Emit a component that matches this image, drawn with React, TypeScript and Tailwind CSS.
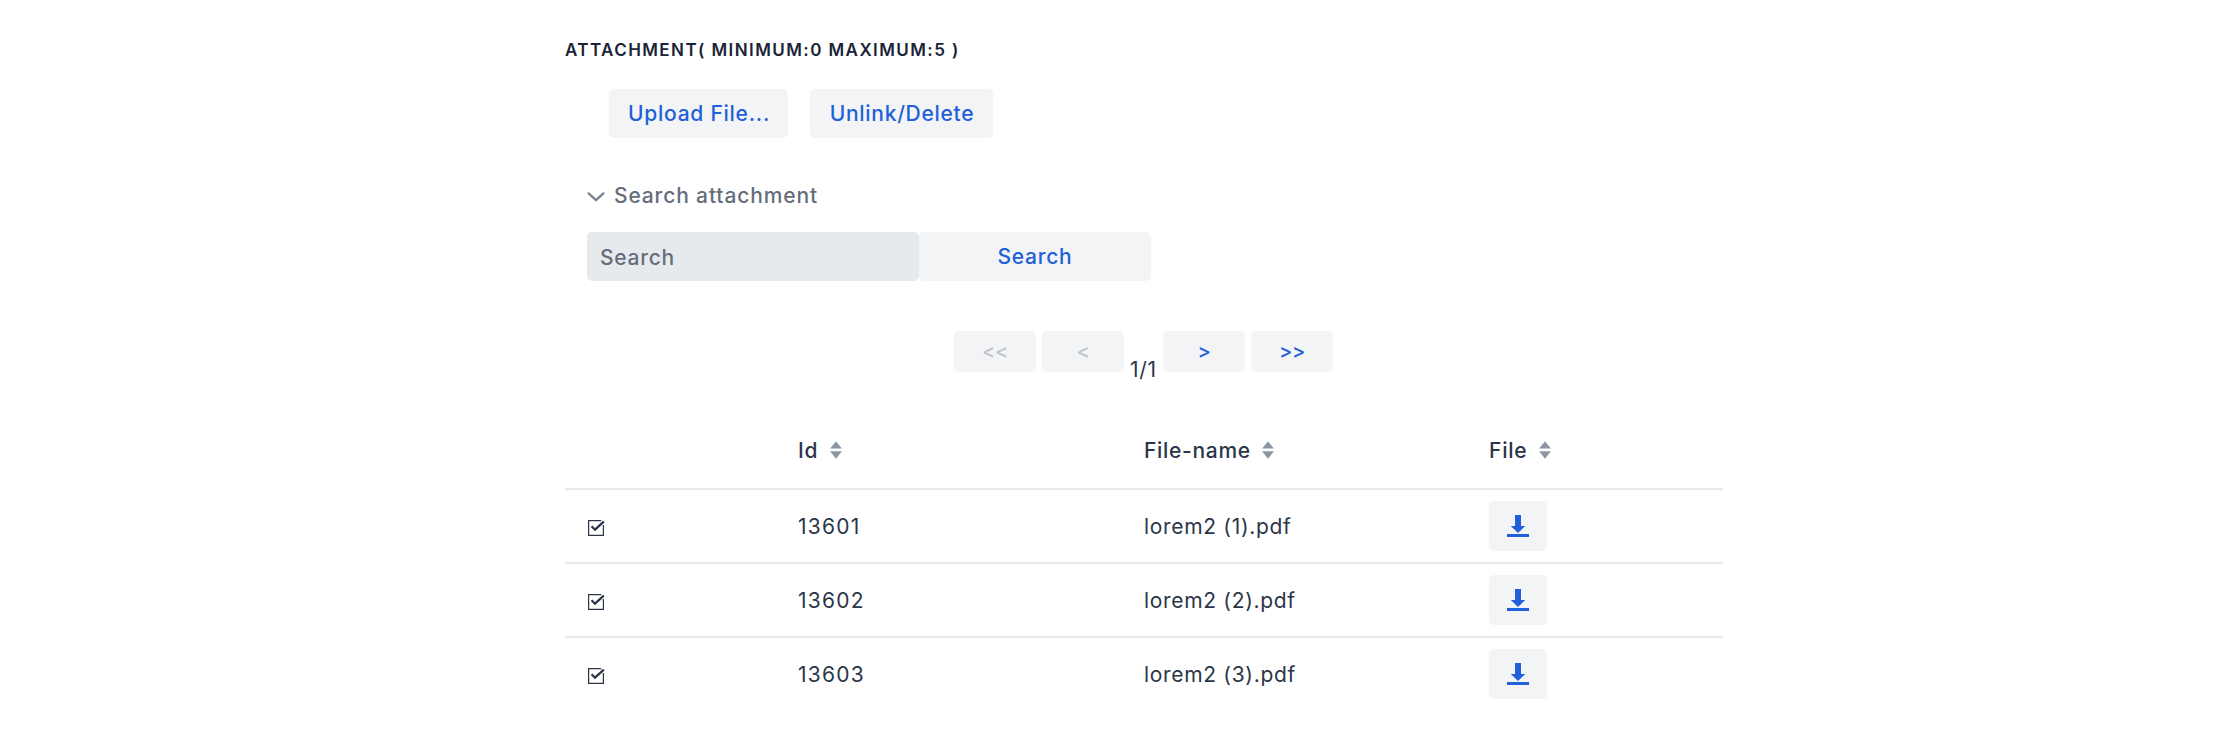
import type { ReactNode } from "react";

const rows = [
  { id: "13601", name: "lorem2 (1).pdf" },
  { id: "13602", name: "lorem2 (2).pdf" },
  { id: "13603", name: "lorem2 (3).pdf" },
];

const GRID = "grid grid-cols-[210px_346px_346px_256px]";

function SortIcon() {
  return (
    <svg width="12" height="18" viewBox="0 0 12 18" fill="#8f96a3" className="-mt-0.5">
      <path d="M6 0.2 11.9 7.5H0.1zM6 17.8 0.1 10.3h11.8z" />
    </svg>
  );
}

function CheckIcon() {
  return (
    <svg width="18" height="18" viewBox="0 0 18 18" fill="none" stroke="#2b3648">
      <path d="M14.2 1.6H1.6v14.8h14.8V6" strokeWidth="1.2" />
      <path d="M4.6 7.2 8 10.7 16.8 2.6" strokeWidth="2.3" />
    </svg>
  );
}

function DownloadIcon() {
  return (
    <svg width="22" height="22" viewBox="0 0 22 22" fill="#2160d8">
      <path d="M8 0h6v11h4.2L11 18 3.8 11H8zM0 19h22v3H0z" />
    </svg>
  );
}

function Button({ className, children }: { className: string; children: ReactNode }) {
  return (
    <button
      className={`flex shrink-0 items-center justify-center rounded-[5px] bg-[#f3f4f6] font-medium text-[#2160d8] ${className}`}
    >
      {children}
    </button>
  );
}

function Header({ label, className }: { label: string; className: string }) {
  return (
    <div className={`flex h-[78px] items-center border-b-2 border-[#e6eaed] pt-0.5 font-medium ${className}`}>
      <span>{label}</span>
      <SortIcon />
    </div>
  );
}

export default function App() {
  return (
    <main className="h-[746px] overflow-hidden bg-white pl-[565px] pt-10 font-['Inter',sans-serif] text-[21px] leading-7 tracking-[0.75px] text-[#2b3648]">
      <h2 className="text-[17px] font-[560] leading-5 tracking-[1.42px] text-[#1a2436]">
        ATTACHMENT( MINIMUM:0 MAXIMUM:5 )
      </h2>

      <div className="mt-[29px] flex gap-[22px] pl-11">
        <Button className="h-[49px] w-[179px] pl-px">Upload File...</Button>
        <Button className="h-[49px] w-[183px] pl-px tracking-[0.7px]">Unlink/Delete</Button>
      </div>

      <div className="mt-[43px] flex h-7 items-center gap-[9px] pl-[22px] font-medium text-[#646d7c]">
        <svg width="18" height="10" viewBox="0 0 18 10" className="mt-[3px]" fill="none" stroke="#7d8592" strokeWidth="2.4" strokeLinecap="round" strokeLinejoin="round">
          <path d="M1.6 1.4 9 8.2 16.4 1.4" />
        </svg>
        <span className="mt-0.5 tracking-[0.86px]">Search attachment</span>
      </div>

      <div className="mt-[23px] flex pl-[22px]">
        <div className="flex h-[49px] w-[332px] items-center rounded-[5px] bg-[#e6eaed] pl-[13px] pt-[3px] font-medium text-[#646d7c]">
          Search
        </div>
        <Button className="h-[49px] w-[232px]">Search</Button>
      </div>

      <div className="mt-[50px] flex h-[53px] pl-[389px]">
        <Button className="h-[41px] w-[82px] pb-px text-[20px] tracking-[-0.3px] text-[#bfc4cd]">&lt;&lt;</Button>
        <Button className="ml-1.5 h-[41px] w-[82px] pb-px text-[20px] tracking-[-0.3px] text-[#bfc4cd]">&lt;</Button>
        <span className="ml-1.5 w-[33px] self-end">1/1</span>
        <Button className="h-[41px] w-[82px] pb-px text-[20px] tracking-[-0.3px]">&gt;</Button>
        <Button className="ml-1.5 h-[41px] w-[82px] pb-px text-[20px] tracking-[-0.3px]">&gt;&gt;</Button>
      </div>

      <div className="mt-7 w-[1158px]">
        <div className={GRID}>
          <div className="h-[78px] border-b-2 border-r border-b-[#e6eaed] border-r-transparent" />
          <Header label="Id" className="gap-[12px] pl-[23px]" />
          <Header label="File-name" className="gap-[11px] pl-[23px] tracking-[0.7px]" />
          <Header label="File" className="gap-[12px] pl-[22px]" />
        </div>
        {rows.map((row, i) => {
          const line = i < rows.length - 1 ? "border-b-[#e6eaed]" : "border-b-transparent";
          const cell = `flex h-[74px] items-center border-b-2 ${line}`;
          return (
            <div key={row.id} className={GRID}>
              <div className={`${cell} border-r border-r-transparent pl-[22px] pt-[3px]`}>
                <CheckIcon />
              </div>
              <div className={`${cell} pl-[23px] pt-0.5 tracking-[1.25px]`}>{row.id}</div>
              <div className={`${cell} pl-[23px] pt-0.5 tracking-[0.68px]`}>{row.name}</div>
              <div className={`${cell} pl-[22px]`}>
                <Button className="h-[50px] w-[58px]">
                  <DownloadIcon />
                </Button>
              </div>
            </div>
          );
        })}
      </div>
    </main>
  );
}
